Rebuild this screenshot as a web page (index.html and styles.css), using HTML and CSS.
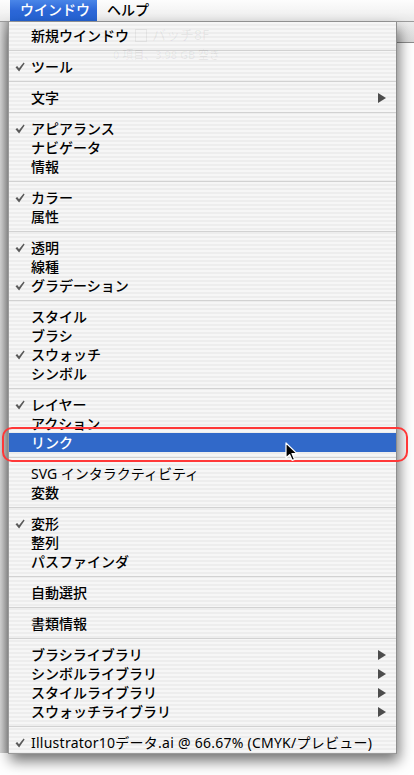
FILE: index.html
```html
<!DOCTYPE html>
<html lang="ja">
<head>
<meta charset="utf-8">
<title>ウインドウ メニュー</title>
<link rel="stylesheet" href="styles.css">
</head>
<body>
<div class="menubar">
  <div class="mb-item active">ウインドウ</div>
  <div class="mb-item">ヘルプ</div>
</div>
<div class="stage">
  <div class="bg-left"></div>
  <div class="panel">
    <div class="ghost">
      <div class="ghost-title"><span class="ghost-icon"></span>バッチ8F</div>
      <div class="ghost-info">0 項目、3.98 GB 空き</div>
    </div>
    <div class="item"><span class="chk"></span><span class="lbl">新規ウインドウ</span></div>
    <div class="sep"></div>
    <div class="item"><span class="chk"><svg viewBox="0 0 10 10"><path d="M0.5 5.2 L2.2 4 L4 6.2 L8.6 0.6 L9.6 1.4 L4.1 9.4 Z"/></svg></span><span class="lbl">ツール</span></div>
    <div class="sep"></div>
    <div class="item"><span class="chk"></span><span class="lbl">文字</span><svg class="arr" viewBox="0 0 8 10"><polygon points="0,0 8,5 0,10"/></svg></div>
    <div class="sep"></div>
    <div class="item"><span class="chk"><svg viewBox="0 0 10 10"><path d="M0.5 5.2 L2.2 4 L4 6.2 L8.6 0.6 L9.6 1.4 L4.1 9.4 Z"/></svg></span><span class="lbl">アピアランス</span></div>
    <div class="item"><span class="chk"></span><span class="lbl">ナビゲータ</span></div>
    <div class="item"><span class="chk"></span><span class="lbl">情報</span></div>
    <div class="sep"></div>
    <div class="item"><span class="chk"><svg viewBox="0 0 10 10"><path d="M0.5 5.2 L2.2 4 L4 6.2 L8.6 0.6 L9.6 1.4 L4.1 9.4 Z"/></svg></span><span class="lbl">カラー</span></div>
    <div class="item"><span class="chk"></span><span class="lbl">属性</span></div>
    <div class="sep"></div>
    <div class="item"><span class="chk"><svg viewBox="0 0 10 10"><path d="M0.5 5.2 L2.2 4 L4 6.2 L8.6 0.6 L9.6 1.4 L4.1 9.4 Z"/></svg></span><span class="lbl">透明</span></div>
    <div class="item"><span class="chk"></span><span class="lbl">線種</span></div>
    <div class="item"><span class="chk"><svg viewBox="0 0 10 10"><path d="M0.5 5.2 L2.2 4 L4 6.2 L8.6 0.6 L9.6 1.4 L4.1 9.4 Z"/></svg></span><span class="lbl">グラデーション</span></div>
    <div class="sep"></div>
    <div class="item"><span class="chk"></span><span class="lbl">スタイル</span></div>
    <div class="item"><span class="chk"></span><span class="lbl">ブラシ</span></div>
    <div class="item"><span class="chk"><svg viewBox="0 0 10 10"><path d="M0.5 5.2 L2.2 4 L4 6.2 L8.6 0.6 L9.6 1.4 L4.1 9.4 Z"/></svg></span><span class="lbl">スウォッチ</span></div>
    <div class="item"><span class="chk"></span><span class="lbl">シンボル</span></div>
    <div class="sep"></div>
    <div class="item"><span class="chk"><svg viewBox="0 0 10 10"><path d="M0.5 5.2 L2.2 4 L4 6.2 L8.6 0.6 L9.6 1.4 L4.1 9.4 Z"/></svg></span><span class="lbl">レイヤー</span></div>
    <div class="item"><span class="chk"></span><span class="lbl">アクション</span></div>
    <div class="item selected"><span class="chk"></span><span class="lbl">リンク</span></div>
    <div class="sep"></div>
    <div class="item"><span class="chk"></span><span class="lbl latin">SVG インタラクティビティ</span></div>
    <div class="item"><span class="chk"></span><span class="lbl">変数</span></div>
    <div class="sep"></div>
    <div class="item"><span class="chk"><svg viewBox="0 0 10 10"><path d="M0.5 5.2 L2.2 4 L4 6.2 L8.6 0.6 L9.6 1.4 L4.1 9.4 Z"/></svg></span><span class="lbl">変形</span></div>
    <div class="item"><span class="chk"></span><span class="lbl">整列</span></div>
    <div class="item"><span class="chk"></span><span class="lbl">パスファインダ</span></div>
    <div class="sep"></div>
    <div class="item"><span class="chk"></span><span class="lbl">自動選択</span></div>
    <div class="sep"></div>
    <div class="item"><span class="chk"></span><span class="lbl">書類情報</span></div>
    <div class="sep"></div>
    <div class="item"><span class="chk"></span><span class="lbl">ブラシライブラリ</span><svg class="arr" viewBox="0 0 8 10"><polygon points="0,0 8,5 0,10"/></svg></div>
    <div class="item"><span class="chk"></span><span class="lbl">シンボルライブラリ</span><svg class="arr" viewBox="0 0 8 10"><polygon points="0,0 8,5 0,10"/></svg></div>
    <div class="item"><span class="chk"></span><span class="lbl">スタイルライブラリ</span><svg class="arr" viewBox="0 0 8 10"><polygon points="0,0 8,5 0,10"/></svg></div>
    <div class="item"><span class="chk"></span><span class="lbl">スウォッチライブラリ</span><svg class="arr" viewBox="0 0 8 10"><polygon points="0,0 8,5 0,10"/></svg></div>
    <div class="sep"></div>
    <div class="item"><span class="chk"><svg viewBox="0 0 10 10"><path d="M0.5 5.2 L2.2 4 L4 6.2 L8.6 0.6 L9.6 1.4 L4.1 9.4 Z"/></svg></span><span class="lbl latin wide">Illustrator10データ.ai @ 66.67% (CMYK/プレビュー)</span></div>
  </div>
  <div class="bg-right"><div class="bg-right-bar"></div></div>
</div>
<div class="annot"></div>
<svg class="cursor" viewBox="0 0 13 20"><path d="M1 1 L1 16 L4.6 12.6 L7.2 18.4 L9.6 17.4 L7 11.6 L12 11.6 Z" fill="#000" stroke="#fff" stroke-width="1.2" stroke-linejoin="round"/></svg>
</body>
</html>
```
FILE: styles.css
```css
* { box-sizing: border-box; }
html, body { margin: 0; padding: 0; }
body {
  width: 414px;
  height: 775px;
  overflow: hidden;
  background: #ffffff;
  font-family: "Noto Sans", "Noto Sans CJK JP", sans-serif;
  font-size: 14px;
  font-weight: 500;
  color: #000;
  position: relative;
}
.menubar {
  height: 22px;
  display: flex;
  align-items: stretch;
  background: linear-gradient(to bottom, #fdfdfd 0%, #f3f3f3 60%, #e9e9e9 100%);
  border-bottom: 1px solid #9c9c9c;
}
.mb-item {
  line-height: 20px;
  height: 21px;
  padding: 0 0 0 10px;
  color: #000;
}
.mb-item.active {
  margin-left: 10px;
  width: 87px;
  background: linear-gradient(to bottom, #4a86e8 0%, #2d68d8 50%, #2462d2 100%);
  color: #fff;
}
.stage {
  display: flex;
  align-items: flex-start;
}
.bg-left {
  width: 8px;
  height: 731px;
  background: linear-gradient(to right, #d6d6d6, #b9b9b9 70%, #a9a9a9);
}
.panel {
  position: relative;
  z-index: 1;
  width: 389px;
  padding: 4px 0 1px;
  border-left: 1px solid #9a9a9a;
  border-right: 1px solid #8e8e8e;
  border-bottom: 1px solid #9a9a9a;
  background: repeating-linear-gradient(to bottom, #f6f6f6 0px, #f6f6f6 2px, #ededed 2px, #ededed 4px);
  box-shadow: 2px 7px 13px rgba(0, 0, 0, 0.55);
}
.ghost {
  position: absolute;
  left: 104px;
  top: 4px;
  color: rgba(0, 0, 0, 0.06);
  pointer-events: none;
}
.ghost-title {
  display: flex;
  align-items: center;
  gap: 5px;
  font-size: 14px;
  line-height: 18px;
  margin-left: 22px;
}
.ghost-icon {
  width: 12px;
  height: 13px;
  border: 1px solid rgba(0, 0, 0, 0.06);
}
.ghost-info {
  font-size: 11px;
  line-height: 14px;
  margin-top: 4px;
}
.item {
  position: relative;
  height: 19px;
  display: flex;
  align-items: center;
  line-height: 18px;
  padding-right: 10px;
  white-space: nowrap;
}
.chk {
  width: 22px;
  flex: none;
  display: flex;
  align-items: center;
  padding-left: 6px;
  height: 19px;
}
.chk svg {
  width: 10px;
  height: 10px;
  fill: #5a5a5a;
  margin-top: 1px;
}
.lbl { flex: 1; }
.lbl.latin { font-weight: 400; }
.lbl.wide { letter-spacing: 0.25px; }
.arr {
  width: 8px;
  height: 10px;
  fill: #4d4d4d;
  flex: none;
}
.item.selected {
  background: #3169c9;
  color: #fff;
}
.sep {
  height: 12px;
  padding-top: 5px;
}
.sep::before {
  content: "";
  display: block;
  height: 1px;
  background: #d2d2d2;
}
.bg-right {
  flex: 1;
  height: 60px;
  background: #ffffff;
}
.bg-right-bar {
  height: 21px;
  background: linear-gradient(to bottom, #ededed, #d9d9d9);
  border-bottom: 1px solid #8c8c8c;
}
.annot {
  position: absolute;
  left: 2px;
  top: 427px;
  width: 406px;
  height: 35px;
  border: 2px solid #ff3838;
  border-radius: 10px;
  z-index: 2;
}
.cursor {
  position: absolute;
  left: 285px;
  top: 442px;
  width: 13px;
  height: 20px;
  z-index: 3;
}
```
